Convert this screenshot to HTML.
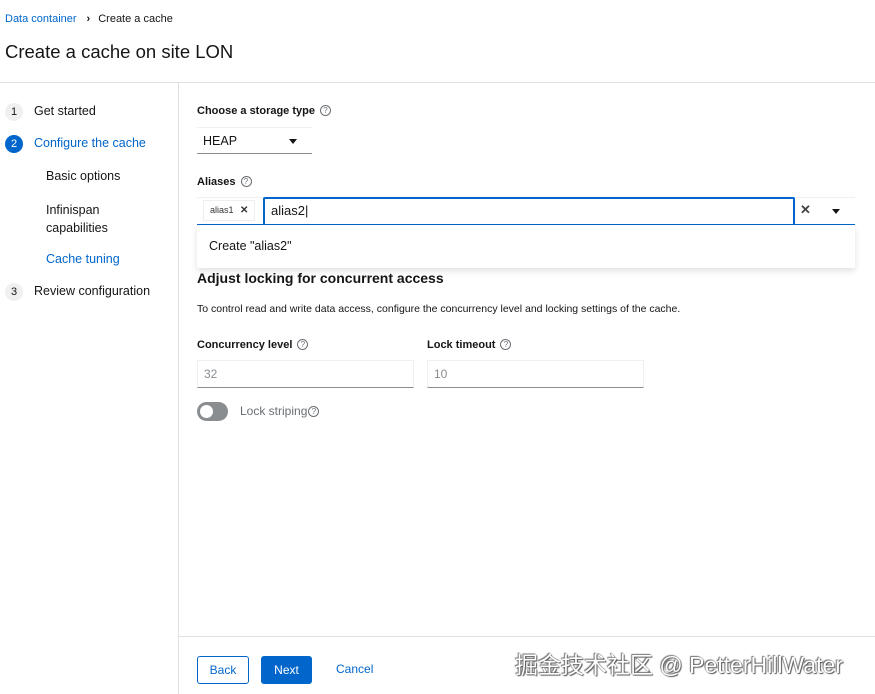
<!DOCTYPE html>
<html><head><meta charset="utf-8"><style>
*{box-sizing:border-box;margin:0;padding:0}
body{width:875px;height:694px;overflow:hidden;background:#fff;font-family:"Liberation Sans",sans-serif;color:#151515;position:relative}
.a{position:absolute;white-space:nowrap}
.q{display:inline-block;width:11px;height:11px;border:1px solid #6a6e73;border-radius:50%;font-size:8px;text-align:center;line-height:9px;color:#6a6e73;vertical-align:1px;margin-left:5px;font-weight:normal}
.num{position:absolute;width:18px;height:18px;border-radius:50%;background:#f0f0f0;font-size:11px;text-align:center;line-height:18px;color:#151515}
.lbl{font-size:11px;font-weight:bold}
.inp{position:absolute;border:1px solid #f0f0f0;border-bottom:1px solid #8a8d90;font-size:12px;color:#8a8d90;padding:0 0 0 6px;line-height:26px;height:28px}
</style></head><body>
<div class="a" style="left:5px;top:13px;font-size:11px"><span style="color:#0066cc">Data container</span><span style="margin:0 8px 0 10px;font-weight:bold">›</span>Create a cache</div>
<div class="a" style="left:5px;top:41px;font-size:18.5px">Create a cache on site LON</div>
<div class="a" style="left:0;top:82px;width:875px;height:1px;background:#e0e0e0"></div>
<div class="a" style="left:178px;top:83px;width:1px;height:611px;background:#e0e0e0"></div>
<div class="num" style="left:5px;top:103px">1</div>
<div class="a" style="left:34px;top:104px;font-size:12.5px">Get started</div>
<div class="num" style="left:5px;top:135px;background:#0066cc;color:#fff">2</div>
<div class="a" style="left:34px;top:136px;font-size:12.5px;color:#0066cc">Configure the cache</div>
<div class="a" style="left:46px;top:169px;font-size:12.5px">Basic options</div>
<div class="a" style="left:46px;top:201px;font-size:12.5px;line-height:18px">Infinispan<br>capabilities</div>
<div class="a" style="left:46px;top:252px;font-size:12.5px;color:#0066cc">Cache tuning</div>
<div class="num" style="left:5px;top:283px">3</div>
<div class="a" style="left:34px;top:284px;font-size:12.5px">Review configuration</div>

<div class="a lbl" style="left:197px;top:105px">Choose a storage type<span class="q">?</span></div>
<div class="a" style="left:197px;top:127px;width:115px;height:27px;border-bottom:1px solid #8a8d90;border-top:1px solid #f0f0f0;font-size:12.5px;padding-left:6px;line-height:26px">HEAP<span style="position:absolute;left:92px;top:11px;border-left:4px solid transparent;border-right:4px solid transparent;border-top:5px solid #151515"></span></div>
<div class="a lbl" style="left:197px;top:176px">Aliases<span class="q">?</span></div>
<div class="a" style="left:197px;top:197px;width:658px;height:28px;border-bottom:1px solid #0066cc;border-top:1px solid #f0f0f0"></div>
<div class="a" style="left:203px;top:200px;width:52px;height:21px;border:1px solid #eee;font-size:9px;line-height:19px;padding-left:6px;color:#333">alias1 <span style="margin-left:4px;font-size:10px;font-weight:bold">✕</span></div>
<div class="a" style="left:263px;top:197px;width:532px;height:28px;border:2px solid #0066cc;border-bottom-width:1px;border-radius:2px;font-size:13px;line-height:24px;padding-left:6px">alias2|</div>
<div class="a" style="left:800px;top:202px;font-size:13px;font-weight:bold;color:#444">✕</div>
<div class="a" style="left:832px;top:209px;border-left:4px solid transparent;border-right:4px solid transparent;border-top:5px solid #151515"></div>
<div class="a" style="left:197px;top:226px;width:658px;height:42px;background:#fff;box-shadow:0 3px 6px rgba(0,0,0,.12);font-size:12.5px;padding:13px 0 0 12px;color:#151515">Create "alias2"</div>
<div class="a" style="left:197px;top:270px;font-size:14px;font-weight:bold">Adjust locking for concurrent access</div>
<div class="a" style="left:197px;top:303px;font-size:10.5px">To control read and write data access, configure the concurrency level and locking settings of the cache.</div>
<div class="a lbl" style="left:197px;top:339px">Concurrency level<span class="q">?</span></div>
<div class="a lbl" style="left:427px;top:339px">Lock timeout<span class="q">?</span></div>
<div class="inp" style="left:197px;top:360px;width:217px">32</div>
<div class="inp" style="left:427px;top:360px;width:217px">10</div>
<div class="a" style="left:197px;top:402px;width:31px;height:19px;border-radius:10px;background:#8a8d90"><div style="position:absolute;left:3px;top:3px;width:13px;height:13px;border-radius:50%;background:#fff"></div></div>
<div class="a" style="left:240px;top:404px;font-size:12px;color:#6a6e73">Lock striping<span class="q" style="margin-left:1px">?</span></div>

<div class="a" style="left:179px;top:636px;width:696px;height:1px;background:#e0e0e0"></div>
<div class="a" style="left:197px;top:656px;width:52px;height:28px;border:1px solid #0066cc;border-radius:3px;font-size:12px;color:#0066cc;text-align:center;line-height:26px">Back</div>
<div class="a" style="left:261px;top:656px;width:51px;height:28px;background:#0066cc;border-radius:3px;font-size:12px;color:#fff;text-align:center;line-height:28px">Next</div>
<div class="a" style="left:336px;top:662px;font-size:12px;color:#0066cc">Cancel</div>
<div class="a" style="left:515px;top:646px;font-size:23px;color:#fff;font-family:'Liberation Sans','Noto Sans CJK SC',sans-serif;text-shadow:0 0 1px #555,1px 1px 1px #555,-1px -1px 1px #777">掘金技术社区 @ PetterHillWater</div>
</body></html>
